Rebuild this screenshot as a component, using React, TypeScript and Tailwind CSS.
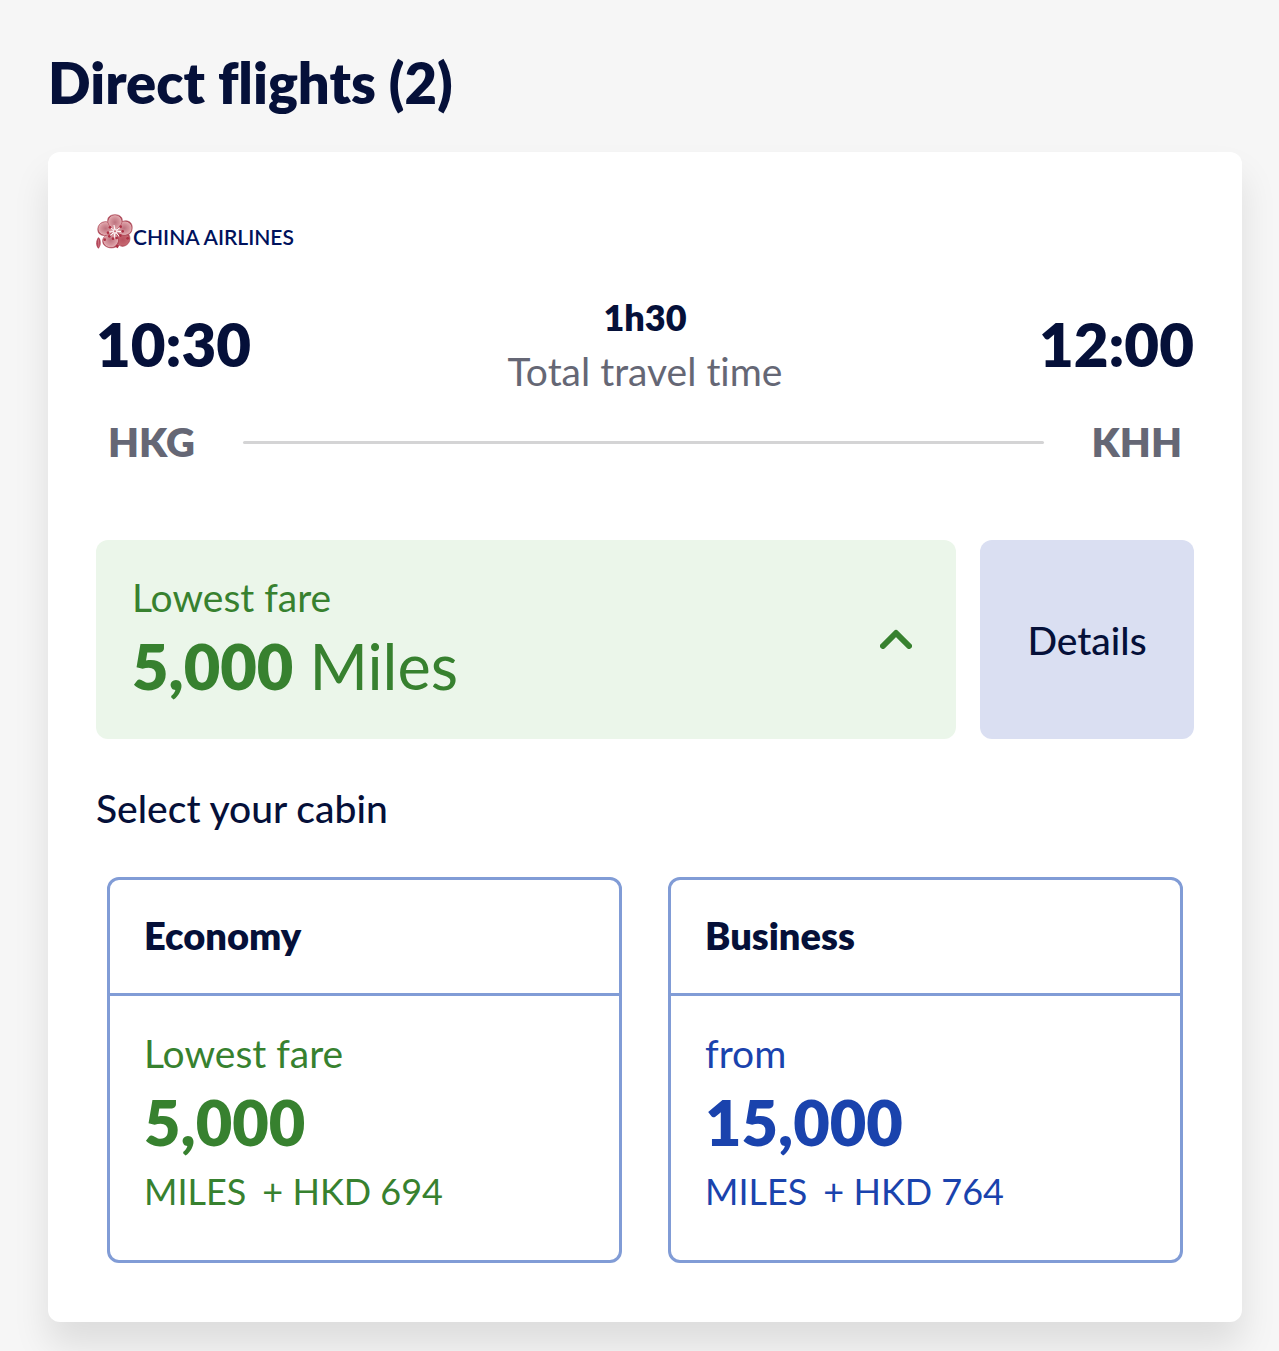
import React from 'react';

const cabins = [
  { name: 'Economy', label: 'Lowest fare', miles: '5,000', tax: 'HKD 694', tone: 'text-[#37812f]' },
  { name: 'Business', label: 'from', miles: '15,000', tax: 'HKD 764', tone: 'text-[#1a43ad]' },
];

function PlumBlossom() {
  return (
    <svg viewBox="18 25 111 105" className="w-[37px] h-[35px] shrink-0" aria-hidden="true">
      <defs>
        <radialGradient id="petal">
          <stop offset="0" stopColor="#bd727e" />
          <stop offset="0.6" stopColor="#d4929a" />
          <stop offset="0.88" stopColor="#e0a9ae" />
          <stop offset="1" stopColor="#a53c4d" />
        </radialGradient>
        <radialGradient id="petalDark">
          <stop offset="0" stopColor="#b9515f" />
          <stop offset="0.8" stopColor="#c5666f" />
          <stop offset="1" stopColor="#b04453" />
        </radialGradient>
      </defs>
      <g stroke="#b4505f" strokeWidth="2">
        <path d="M76 92 C90 80 108 76 117 88 C125 101 116 119 100 122 C88 124 76 110 76 92Z" fill="url(#petalDark)" />
        <path d="M72 78 C88 88 91 116 77 124 C62 131 40 124 38 108 C36 92 56 80 72 78Z" fill="url(#petal)" />
        <path d="M70 78 C53 93 31 93 25 80 C19 64 30 47 48 48 C61 49 72 62 70 78Z" fill="url(#petal)" />
        <path d="M78 76 C77 57 93 43 112 46 C126 49 129 63 125 76 C120 92 94 94 78 80Z" fill="url(#petal)" />
        <path d="M73 73 C57 64 49 48 55 36 C62 24 88 24 95 36 C101 48 91 64 77 73Z" fill="url(#petal)" />
      </g>
      <path d="M75 77L61 65M75 77L72 58M75 77L91 65M75 77L98 78M75 77L89 94M75 77L72 100M75 77L58 92M75 77L51 80" stroke="#fff" strokeWidth="3" />
      <circle cx="75" cy="77" r="8" fill="#f7e4e6" />
      <g fill="#ad2f42">
        <circle cx="60" cy="65" r="4" />
        <circle cx="92" cy="63" r="4" />
        <circle cx="98" cy="77" r="4" />
        <circle cx="91" cy="90" r="4" />
        <circle cx="80" cy="97" r="4" />
        <circle cx="69" cy="99" r="4" />
        <circle cx="58" cy="92" r="4" />
        <circle cx="54" cy="81" r="4" />
        <circle cx="44" cy="102" r="4" />
        <circle cx="113" cy="98" r="4" />
        <path d="M78 117l10 2-5 9-6-4Z" />
      </g>
      <circle cx="75" cy="77" r="3" fill="#c86773" />
      <path d="M25 95 C34 100 35 120 25 129 C16 122 17 103 25 95Z" fill="#b3475a" />
      <path d="M25 101L27 124" stroke="#d98c97" strokeWidth="2" />
    </svg>
  );
}

function Chevron() {
  return (
    <svg viewBox="0 0 32 20" className="w-8 h-5 shrink-0" fill="none" stroke="currentColor" strokeWidth="6" strokeLinecap="round" strokeLinejoin="round" aria-hidden="true">
      <path d="M3 17L16 4L29 17" />
    </svg>
  );
}

export default function App() {
  return (
    <main className="min-h-screen bg-[#f6f6f6] pt-12 pl-12 pr-[37px] pb-12 font-['Lato',sans-serif] text-[39px] leading-[54px] text-[#051039] [font-variant-ligatures:none]">
      <h1 className="text-[56px] leading-[70px] font-extrabold mb-[34px]">Direct flights (2)</h1>

      <article className="bg-white rounded-xl px-12 pt-[61px] pb-[59px] shadow-[0_24px_36px_rgba(0,0,0,0.1)]">
        <div className="flex items-end h-9">
          <PlumBlossom />
          <span className="text-[21px] leading-6 font-semibold text-[#00125c] whitespace-nowrap">CHINA AIRLINES</span>
        </div>

        <div className="flex items-center justify-between mt-[41px]">
          <time className="text-[60px] leading-[72px] font-extrabold">10:30</time>
          <div className="text-center">
            <p className="text-[36px] font-extrabold">1h30</p>
            <p className="text-[#656775]">Total travel time</p>
          </div>
          <time className="text-[60px] leading-[72px] font-extrabold">12:00</time>
        </div>

        <div className="flex items-center gap-12 mt-5 px-3 text-[40px] leading-[48px] font-extrabold text-[#656775]">
          <span>HKG</span>
          <div className="flex-1 h-[3px] rounded-full bg-[#d4d4d5]" />
          <span>KHH</span>
        </div>

        <div className="flex gap-6 mt-[74px]">
          <button type="button" aria-expanded="true" className="flex-1 flex items-center justify-between rounded-xl bg-[#ebf6ea] pt-[30px] pb-[31px] pl-9 pr-11 text-left text-[#37812f]">
            <span>
              <span className="block">Lowest fare</span>
              <span className="block text-[63px] leading-[84px]"><b className="font-extrabold">5,000</b> Miles</span>
            </span>
            <Chevron />
          </button>
          <button type="button" className="w-[214px] rounded-xl bg-[#dadff2] font-medium">Details</button>
        </div>

        <h2 className="mt-[42px] font-medium">Select your cabin</h2>

        <div className="grid grid-cols-2 gap-[46px] mt-[42px] px-[11px]">
          {cabins.map((cabin) => (
            <button key={cabin.name} type="button" className="rounded-xl border-3 border-[#819cd6] text-left">
              <span className="block border-b-3 border-[#819cd6] px-[34px] pt-[28px] pb-[31px] text-[38px] font-extrabold">{cabin.name}</span>
              <span className={`block px-[34px] pt-[30px] pb-[42px] ${cabin.tone}`}>
                <span className="block">{cabin.label}</span>
                <b className="block text-[63px] leading-[84px] font-extrabold">{cabin.miles}</b>
                <span className="flex gap-4 text-[36px]">
                  <span>MILES</span>
                  <span>+ {cabin.tax}</span>
                </span>
              </span>
            </button>
          ))}
        </div>
      </article>
    </main>
  );
}
